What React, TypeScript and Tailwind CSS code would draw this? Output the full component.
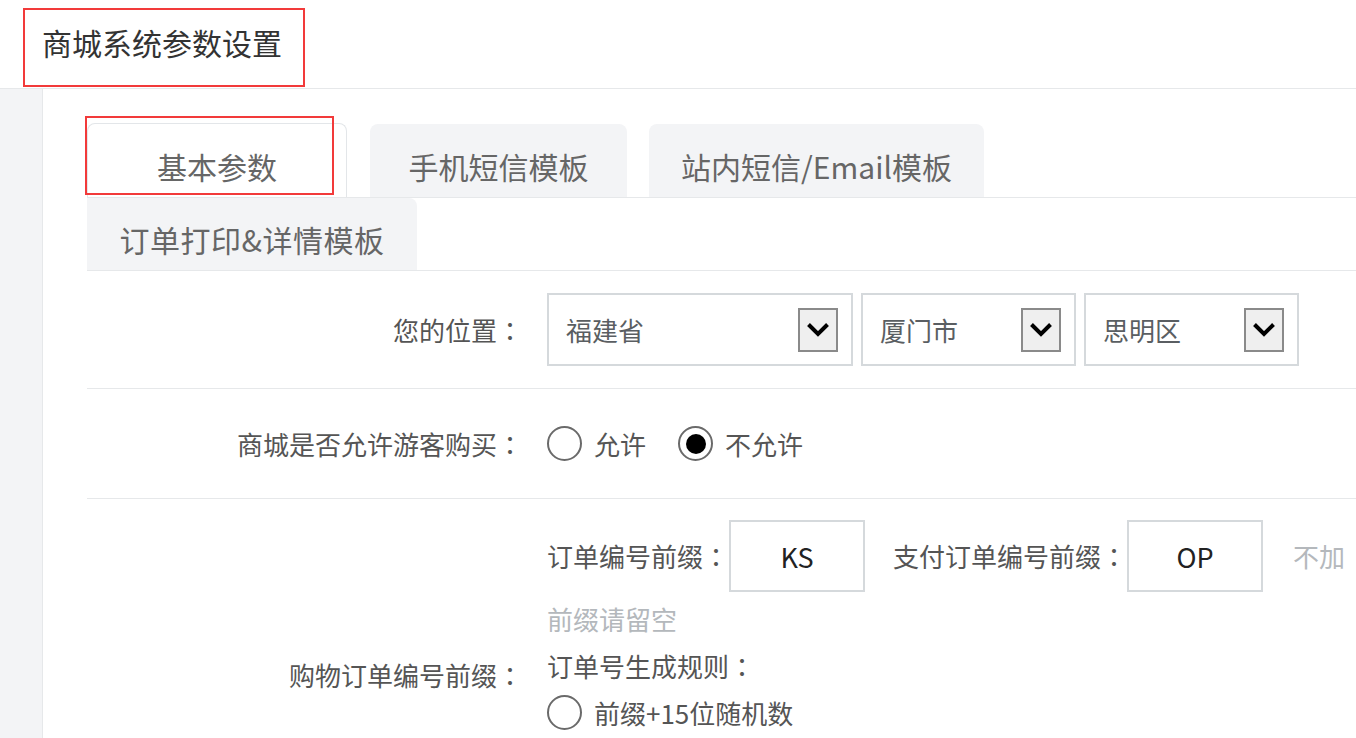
import React from "react";

function Colon() {
  return <span className="font-['Noto_Sans_CJK_TC','Noto_Sans_CJK_JP',sans-serif]">：</span>;
}

function Chevron() {
  return (
    <svg width="24" height="15" viewBox="0 0 24 15">
      <polyline points="2.5,2.5 12,12 21.5,2.5" fill="none" stroke="#000" strokeWidth="4" strokeLinecap="butt" strokeLinejoin="miter" />
    </svg>
  );
}

function SelectBox({ text, w }: { text: string; w: string }) {
  return (
    <div className={`${w} h-[73px] border-2 border-[#d5d9dc] bg-white flex items-center justify-between pl-[17px] pr-[13px]`}>
      <span className="text-[26px] leading-none text-[#5a5e62]">{text}</span>
      <div className="w-[40px] h-[44px] bg-[#efefef] border-2 border-[#8a8a8a] flex items-center justify-center">
        <Chevron />
      </div>
    </div>
  );
}

function Radio({ checked, label }: { checked?: boolean; label: string }) {
  return (
    <div className="flex items-center gap-[12px]">
      <span className="w-[35px] h-[35px] rounded-full border-2 border-[#6a6a6a] bg-white flex items-center justify-center">
        {checked && <span className="w-[20px] h-[20px] rounded-full bg-black" />}
      </span>
      <span className="text-[26px] leading-none text-[#555]">{label}</span>
    </div>
  );
}

export default function App() {
  return (
    <div className="w-[1356px] h-[738px] overflow-hidden bg-white font-['Noto_Sans_CJK_SC',sans-serif] flex flex-col">
      {/* header */}
      <div className="h-[89px] shrink-0 border-b border-[#e6e8ea] pt-[8px] pl-[23px]">
        <div className="w-[282px] h-[79px] border-2 border-[#f23a3a] flex items-center pl-[17px] pb-[12px]">
          <span className="text-[30px] leading-none text-[#333]">商城系统参数设置</span>
        </div>
      </div>

      <div className="flex flex-1 min-h-0">
        <div className="w-[43px] shrink-0 bg-[#f3f4f6] border-r border-[#e6e8ea]" />
        <div className="flex-1 min-w-0 pl-[44px] pt-[34px] overflow-hidden">
          {/* tabs row 1 */}
          <div className="flex gap-[22px] border-b border-[#e6e8ea]">
            <div className="relative w-[260px] h-[74px] bg-white border border-b-0 border-[#e3e6e9] rounded-t-[8px] flex items-center justify-center pt-[10px]">
              <span className="text-[30px] leading-none text-[#666]">基本参数</span>
              <div className="absolute left-[-3px] top-[-8px] w-[249px] h-[79px] border-2 border-[#f23a3a]" />
            </div>
            <div className="w-[257px] h-[73px] mt-[1px] bg-[#f3f4f6] rounded-t-[8px] flex items-center justify-center pt-[10px] ml-[1px]">
              <span className="text-[30px] leading-none text-[#666]">手机短信模板</span>
            </div>
            <div className="w-[335px] h-[73px] mt-[1px] bg-[#f3f4f6] rounded-t-[8px] flex items-center justify-center pt-[10px]">
              <span className="text-[30px] leading-none text-[#666]">站内短信/Email模板</span>
            </div>
          </div>
          {/* tabs row 2 */}
          <div className="flex border-b border-[#e6e8ea]">
            <div className="w-[330px] h-[72px] bg-[#f3f4f6] rounded-tr-[8px] flex items-center justify-center pt-[10px]">
              <span className="text-[30px] leading-none text-[#666] tracking-[0.5px]">订单打印&amp;详情模板</span>
            </div>
          </div>

          {/* row 1 */}
          <div className="flex items-center border-b border-[#e6e8ea] py-[22px]">
            <div className="w-[436px] shrink-0 text-right text-[26px] leading-none text-[#555]">您的位置<Colon /></div>
            <div className="ml-[24px] flex gap-[8px]">
              <SelectBox text="福建省" w="w-[306px]" />
              <SelectBox text="厦门市" w="w-[215px]" />
              <SelectBox text="思明区" w="w-[215px]" />
            </div>
          </div>

          {/* row 2 */}
          <div className="flex items-center border-b border-[#e6e8ea] h-[110px]">
            <div className="w-[436px] shrink-0 text-right text-[26px] leading-none text-[#555]">商城是否允许游客购买<Colon /></div>
            <div className="ml-[24px] flex items-center gap-[32px]">
              <Radio label="允许" />
              <Radio label="不允许" checked />
            </div>
          </div>

          {/* row 3 */}
          <div className="flex items-center border-b border-[#e6e8ea] pt-[21px] pb-[23px]">
            <div className="w-[436px] shrink-0 text-right text-[26px] leading-none text-[#555]">购物订单编号前缀<Colon /></div>
            <div className="ml-[24px] flex flex-col text-[26px] text-[#555]">
              <div className="flex items-center h-[72px] whitespace-nowrap">
                <span className="leading-none">订单编号前缀<Colon /></span>
                <div className="w-[136px] h-[72px] border-2 border-[#d5d9dc] flex items-center justify-center text-[#222] text-[27px] leading-none">KS</div>
                <span className="leading-none ml-[28px]">支付订单编号前缀<Colon /></span>
                <div className="w-[136px] h-[72px] border-2 border-[#d5d9dc] flex items-center justify-center text-[#222] text-[27px] leading-none">OP</div>
                <span className="leading-none ml-[30px] text-[#b4b8bc]">不加</span>
              </div>
              <div className="mt-[3px] h-[47px] flex items-center text-[#b4b8bc] leading-none">前缀请留空</div>
              <div className="h-[47px] flex items-center leading-none">订单号生成规则<Colon /></div>
              <div className="h-[47px] flex items-center">
                <Radio label="前缀+15位随机数" />
              </div>
              <div className="h-[94px]" />
            </div>
          </div>
        </div>
      </div>
    </div>
  );
}
